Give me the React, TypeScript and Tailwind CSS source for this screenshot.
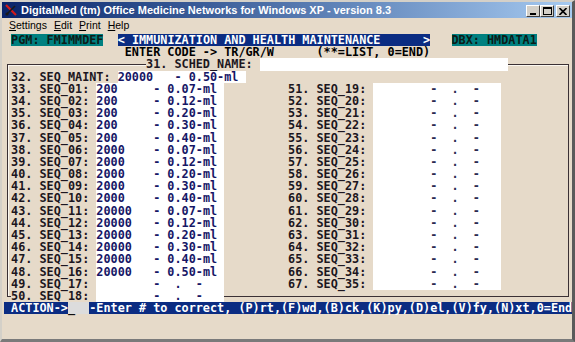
import React from "react";

const LEFT: [string, string, string][] = [
  ["01", "200", "0.07"],
  ["02", "200", "0.12"],
  ["03", "200", "0.20"],
  ["04", "200", "0.30"],
  ["05", "200", "0.40"],
  ["06", "2000", "0.07"],
  ["07", "2000", "0.12"],
  ["08", "2000", "0.20"],
  ["09", "2000", "0.30"],
  ["10", "2000", "0.40"],
  ["11", "20000", "0.07"],
  ["12", "20000", "0.12"],
  ["13", "20000", "0.20"],
  ["14", "20000", "0.30"],
  ["15", "20000", "0.40"],
  ["16", "20000", "0.50"],
  ["17", "", ""],
  ["18", "", ""],
];

const EMPTY = "        -  .  -   ";

const field = (val: string, dose: string) =>
  val ? `${val.padEnd(8)}- ${dose}-ml ` : EMPTY;

const Cell = ({ text, className = "" }: { text: string; className?: string }) => (
  <span className={`inline-block h-[12.2px] whitespace-pre align-top ${className}`}>{text}</span>
);

const Row = ({ children }: { children: React.ReactNode }) => (
  <div className="relative z-10 flex h-[12.2px] leading-[12.2px]">{children}</div>
);

const WinButton = ({ children }: { children: React.ReactNode }) => (
  <div className="flex h-[12px] w-[14px] items-center justify-center border-t border-l border-white border-r border-b border-r-[#404040] border-b-[#404040] bg-[#d4d0c8]">
    {children}
  </div>
);

export default function App() {
  return (
    <div className="relative h-[342px] w-[575px] overflow-hidden border-t-2 border-l-2 border-r-[3px] border-b-[3px] border-t-[#d4d0c8] border-l-[#d4d0c8] border-r-[#5a5a5a] border-b-[#7a7a7a] bg-[#e6dac9]">
      {/* title bar */}
      <div className="flex h-[16px] items-center bg-gradient-to-r from-[#0a246a] to-[#a6caf0] pl-[2px] pr-[2px]">
        <svg width="14" height="14" viewBox="0 0 14 14" className="mr-[3px]">
          <path d="M2 2 L12 12" stroke="#d21a1a" strokeWidth="2.2" />
          <path d="M11 3 L3 11" stroke="#1a1a1a" strokeWidth="1.6" />
          <circle cx="3" cy="11" r="1.6" fill="#1a1a1a" />
        </svg>
        <span className="font-['Liberation_Sans',Arial,sans-serif] text-[11px] font-bold text-white">
          DigitalMed (tm) Office Medicine Networks for Windows XP - version 8.3
        </span>
        <div className="ml-auto mt-[2px] flex items-center">
          <WinButton>
            <svg width="8" height="8" viewBox="0 0 8 8">
              <rect x="1" y="6" width="6" height="2" fill="#000" />
            </svg>
          </WinButton>
          <WinButton>
            <svg width="9" height="8" viewBox="0 0 9 8">
              <rect x="0.5" y="0.5" width="8" height="7" fill="none" stroke="#000" />
              <rect x="0" y="0" width="9" height="2" fill="#000" />
            </svg>
          </WinButton>
          <div className="ml-[2px]">
            <WinButton>
              <svg width="8" height="7" viewBox="0 0 8 7">
                <path d="M0.5 0 L7.5 7 M7.5 0 L0.5 7" stroke="#000" strokeWidth="1.6" />
              </svg>
            </WinButton>
          </div>
        </div>
      </div>

      {/* menu bar */}
      <div className="flex h-[16px] items-center gap-[7px] pl-[7px] font-['Liberation_Sans',Arial,sans-serif] text-[10.5px] text-black">
        <span><u>S</u>ettings</span>
        <span><u>E</u>dit</span>
        <span><u>P</u>rint</span>
        <span><u>H</u>elp</span>
      </div>

      {/* terminal */}
      <div className="relative ml-[2px] font-['DejaVu_Sans_Mono',monospace] text-[11.8px] font-bold text-[#1c1620]">
        <div className="absolute top-[30px] left-[3px] z-0 h-[233px] w-[562px] border border-[#3a3034] shadow-[inset_1px_1px_0_#fbf7f0]" />

        <Row>
          <Cell text=" " />
          <Cell text="PGM: FMIMMDEF" className="bg-[#008080] text-[#0c1c18]" />
          <Cell text="  " />
          <Cell text="< IMMUNIZATION AND HEALTH MAINTENANCE      >" className="bg-[#0b2c82] text-white" />
          <Cell text="   " />
          <Cell text="DBX: HMDATA1" className="bg-[#008080] text-[#0c1c18]" />
        </Row>
        <Row>
          <Cell text={"                 ENTER CODE -> TR/GR/W      (**=LIST, 0=END)"} className="text-black" />
        </Row>
        <Row>
          <Cell text={"                    "} />
          <Cell text="31. SCHED_NAME: " className="bg-[#e6dac9]" />
          <Cell text={" ".repeat(35)} className="bg-white" />
        </Row>
        <Row>
          <Cell text=" " />
          <Cell text="32. SEQ_MAINT: " />
          <Cell text={field("20000", "0.50")} className="bg-white text-[#161666]" />
        </Row>
        {LEFT.map(([n, val, dose], i) => {
          const right = i < 17 ? String(i + 19) : null;
          const last = i === LEFT.length - 1;
          return (
            <Row key={n}>
              <Cell text=" " />
              <Cell
                text={`${i + 33}. SEQ_${n}: `}
                className={last ? "bg-[linear-gradient(to_bottom,transparent_3px,#e6dac9_3px)]" : ""}
              />
              <Cell text={field(val, dose)} className="bg-white text-[#161666]" />
              {right && (
                <>
                  <Cell text={" ".repeat(9)} />
                  <Cell text={`${i + 51}. SEQ_${right}: `} />
                  <Cell text={EMPTY} className="bg-white text-[#2a2a50]" />
                </>
              )}
            </Row>
          );
        })}
        <Row>
          <div className="flex bg-[#0b2c82] text-white">
            <Cell text=" ACTION->" />
            <Cell text="_  " className="bg-[#dcdcdc] text-[#101010]" />
            <Cell text="-Enter # to correct, (P)rt,(F)wd,(B)ck,(K)py,(D)el,(V)fy,(N)xt,0=End" />
          </div>
        </Row>
      </div>
    </div>
  );
}
